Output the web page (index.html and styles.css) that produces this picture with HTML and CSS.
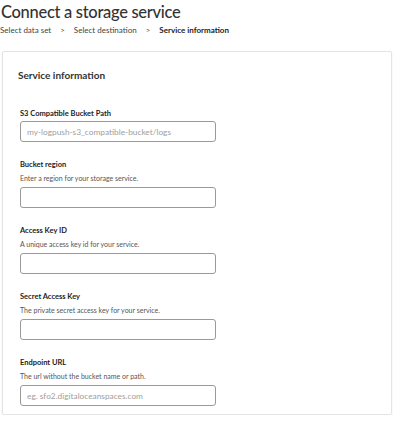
FILE: index.html
```html
<!DOCTYPE html>
<html lang="en">
<head>
    <meta charset="UTF-8">
    <meta name="viewport" content="width=device-width, initial-scale=1.0">
    <title>Connect a storage service</title>
    <link rel="stylesheet" href="styles.css">
</head>
<body>
<header class="page-head">
    <h1>Connect a storage service</h1>
    <nav class="crumbs">
        <span>Select data set</span>
        <span class="sep">&gt;</span>
        <span>Select destination</span>
        <span class="sep">&gt;</span>
        <span class="current">Service information</span>
    </nav>
</header>

<form class="card">
    <h2>Service information</h2>

    <div class="field">
        <label for="bucket">S3 Compatible Bucket Path</label>
        <input type="text" id="bucket" placeholder="my-logpush-s3_compatible-bucket/logs">
    </div>

    <div class="field">
        <label for="region">Bucket region</label>
        <p class="hint">Enter a region for your storage service.</p>
        <input type="text" id="region">
    </div>

    <div class="field">
        <label for="keyId">Access Key ID</label>
        <p class="hint">A unique access key id for your service.</p>
        <input type="text" id="keyId">
    </div>

    <div class="field">
        <label for="secret">Secret Access Key</label>
        <p class="hint">The private secret access key for your service.</p>
        <input type="text" id="secret">
    </div>

    <div class="field">
        <label for="endpoint">Endpoint URL</label>
        <p class="hint">The url without the bucket name or path.</p>
        <input type="text" id="endpoint" placeholder="eg. sfo2.digitaloceanspaces.com">
    </div>
</form>
</body>
</html>
```

FILE: styles.css
```css
body {
    font-family: Lato, "Noto Sans", sans-serif;
    margin: 0;
    background-color: #ffffff;
    color: #222;
}
.page-head {
    padding: 0 0 0 1px;
}
h1 {
    margin: 0;
    font-size: 16.5px;
    line-height: 24px;
    letter-spacing: -0.3px;
    font-weight: 500;
    color: #333;
}
.crumbs {
    display: flex;
    align-items: center;
    gap: 9px;
    margin-left: -1px;
    height: 14px;
    margin-top: -1px;
    font-size: 8px;
    color: #444;
}
.crumbs .sep {
    font-size: 8px;
    color: #555;
}
.crumbs .current {
    font-weight: bold;
    color: #222;
}
.card {
    margin: 14px 2px 0 2px;
    width: 354px;
    padding: 16px 17px 8px 17px;
    border: 1px solid #e4e4e4;
    border-radius: 2px;
    box-shadow: 0 1px 2px rgba(0, 0, 0, 0.08);
    display: flex;
    flex-direction: column;
    gap: 17px;
}
h2 {
    margin: 0 0 9px -2px;
    font-size: 10px;
    line-height: 14px;
    font-weight: bold;
    color: #333;
}
.field {
    display: flex;
    flex-direction: column;
}
.field label {
    font-size: 7.5px;
    line-height: 12px;
    font-weight: bold;
    color: #222;
    margin-bottom: 1px;
}
.hint {
    margin: 0 0 3px 0;
    font-size: 7px;
    line-height: 12px;
    color: #555;
}
input[type=text] {
    box-sizing: border-box;
    width: 196px;
    height: 21px;
    margin: 0;
    padding: 0 6px;
    border: 1px solid #9a9a9a;
    border-radius: 3px;
    font-family: inherit;
    font-size: 8.3px;
    color: #333;
    background: #fff;
}
input::placeholder {
    color: #a0a0a0;
}
```
